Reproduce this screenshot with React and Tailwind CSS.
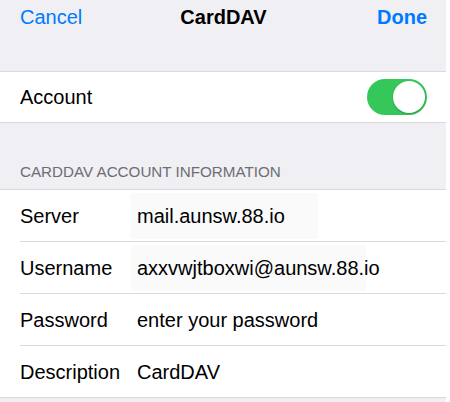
export default function App() {
    const rows = [
        { label: 'Server', value: 'mail.aunsw.88.io', box: 'w-[187px]' },
        { label: 'Username', value: 'axxvwjtboxwi@aunsw.88.io', box: 'w-[235px]' },
        { label: 'Password', value: 'enter your password', box: '' },
        { label: 'Description', value: 'CardDAV', box: '' },
    ];

    return (
        <div className="flex w-[450px] h-[402px] bg-white font-['Liberation_Sans',Arial,sans-serif] overflow-hidden">
            <div className="w-[446px] bg-[#efeff4] flex flex-col">
                {/* Nav bar */}
                <div className="h-[71px]">
                    <div className="grid grid-cols-3 items-center h-[34px] pl-5 pr-[19px] text-[20px]">
                        <span className="text-[#007aff]">Cancel</span>
                        <span className="text-center font-bold text-black">CardDAV</span>
                        <span className="text-right font-bold text-[#007aff]">Done</span>
                    </div>
                </div>

                {/* Account toggle */}
                <div className="bg-white border-y border-[#dadade] h-[52px] flex items-center justify-between pl-5 pr-[19px]">
                    <span className="text-[20px] text-black">Account</span>
                    <div className="w-[60px] h-[36px] rounded-full bg-[#35c759] flex items-center justify-end p-[2px]">
                        <div className="w-[32px] h-[32px] rounded-full bg-white shadow-[0_1px_2px_rgba(0,0,0,0.25)]" />
                    </div>
                </div>

                {/* Section header */}
                <div className="h-[66px] flex items-end pb-[8px] pl-5">
                    <span className="text-[15.2px] leading-[18px] text-[#6d6d72] uppercase">CardDAV Account Information</span>
                </div>

                {/* Info rows */}
                <div className="bg-white border-y border-[#dadade]">
                    {rows.map((row, i) => {
                        const last = i === rows.length - 1;
                        return (
                            <div key={row.label} className="pl-5">
                                <div className={`flex items-center ${last ? 'h-[51px]' : 'h-[52px] border-b border-[#dadade]'}`}>
                                    <span className="w-[117px] text-[20px] text-black">{row.label}</span>
                                    <span className={`${row.box} ${row.box ? 'bg-[#fafafa] -ml-[6px] pl-[6px] py-[8px]' : ''} text-[20px] text-black whitespace-nowrap`}>
                                        {row.value}
                                    </span>
                                </div>
                            </div>
                        );
                    })}
                </div>
            </div>
            <div className="flex-1 bg-white" />
        </div>
    );
}
